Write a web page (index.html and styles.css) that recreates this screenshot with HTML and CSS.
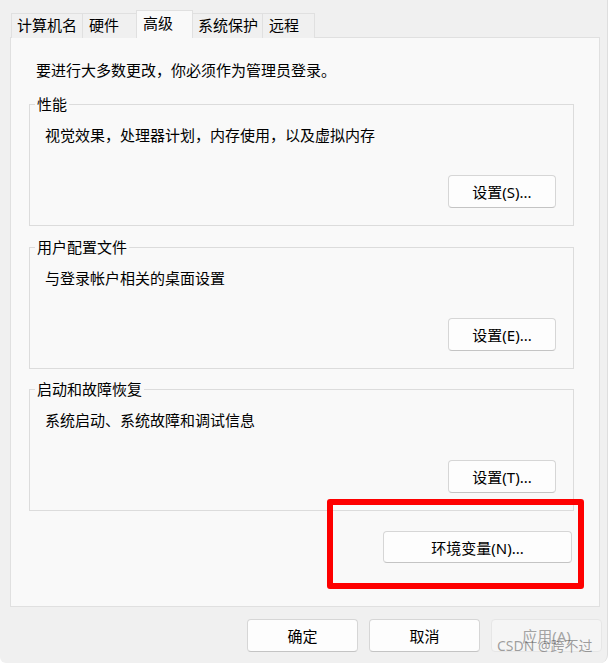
FILE: index.html
```html
<!DOCTYPE html>
<html lang="zh-CN">

<head>
    <meta charset="UTF-8">
    <meta name="viewport" content="width=device-width, initial-scale=1.0">
    <title>系统属性</title>
    <link rel="stylesheet" href="styles.css">
</head>

<body>
    <div class="window">
        <div class="tabs">
            <div class="tab">计算机名</div>
            <div class="tab">硬件</div>
            <div class="tab active">高级</div>
            <div class="tab">系统保护</div>
            <div class="tab">远程</div>
        </div>

        <div class="panel">
            <p class="note">要进行大多数更改，你必须作为管理员登录。</p>

            <fieldset class="group">
                <legend>性能</legend>
                <p class="desc">视觉效果，处理器计划，内存使用，以及虚拟内存</p>
                <div class="group-actions">
                    <button class="btn">设置(S)...</button>
                </div>
            </fieldset>

            <fieldset class="group">
                <legend>用户配置文件</legend>
                <p class="desc">与登录帐户相关的桌面设置</p>
                <div class="group-actions">
                    <button class="btn">设置(E)...</button>
                </div>
            </fieldset>

            <fieldset class="group group-last">
                <legend>启动和故障恢复</legend>
                <p class="desc">系统启动、系统故障和调试信息</p>
                <div class="group-actions">
                    <button class="btn">设置(T)...</button>
                </div>
            </fieldset>

            <div class="env-row">
                <button class="btn btn-env">环境变量(N)...</button>
            </div>
        </div>

        <div class="footer">
            <button class="btn btn-footer">确定</button>
            <button class="btn btn-footer">取消</button>
            <button class="btn btn-footer" disabled>应用(A)</button>
        </div>

        <!-- annotation drawn over the dialog -->
        <div class="highlight"></div>
        <div class="watermark">CSDN @跨不过</div>
    </div>
</body>

</html>
```

FILE: styles.css
```css
* {
    box-sizing: border-box;
}

body {
    margin: 0;
    background-color: #fff;
    font-family: "Segoe UI", "Noto Sans", "Noto Sans CJK SC", sans-serif;
    font-size: 15px;
    color: #000;
}

.window {
    position: relative;
    width: 608px;
    height: 663px;
    background-color: #f0f0f0;
    border-right: 1px solid #dedede;
    border-bottom-right-radius: 8px;
    border-bottom-left-radius: 6px;
    overflow: hidden;
}

/* tab strip */
.tabs {
    display: flex;
    align-items: flex-end;
    height: 38px;
    padding-left: 11px;
}

.tab {
    height: 25px;
    margin-left: -1px;
    padding: 0 5px;
    line-height: 23px;
    white-space: nowrap;
    border: 1px solid #e0e0e0;
    border-bottom: none;
    background-color: #f0f0f0;
}

.tab:first-child {
    margin-left: 0;
}

.tab:nth-child(1) { width: 72px; }
.tab:nth-child(2) { width: 55px; padding-left: 6px; }
.tab:nth-child(4) { width: 71px; }
.tab:nth-child(5) { width: 53px; padding-left: 6px; }

.tab.active {
    position: relative;
    z-index: 1;
    width: 57px;
    height: 28px;
    padding-left: 6px;
    line-height: 25px;
    background-color: #f9f9f9;
}

/* main page of the tab */
.panel {
    width: 590px;
    height: 570px;
    margin: -1px 0 0 10px;
    padding: 0 25px 0 18px;
    border: 1px solid #e0e0e0;
    background-color: #f9f9f9;
}

.note {
    margin: 21px 0 0 7px;
    line-height: 22px;
}

.group {
    margin: 12px 0 0 0;
    padding: 0 17px 17px 0;
    border: 1px solid #dcdcdc;
}

.group + .group {
    margin-top: 10px;
}

.group-last {
    margin-top: 9px !important;
}

.group legend {
    margin-left: 5px;
    padding: 0 2px;
    line-height: 22px;
}

.desc {
    margin: 9px 0 0 15px;
    line-height: 22px;
}

.group-actions {
    display: flex;
    justify-content: flex-end;
    margin-top: 29px;
}

.btn {
    height: 33px;
    width: 108px;
    padding: 0;
    font-family: inherit;
    font-size: 15px;
    color: #000;
    background-color: #fdfdfd;
    border: 1px solid #d6d6d6;
    border-bottom-color: #c4c4c4;
    border-radius: 4px;
}

.btn:disabled {
    color: #a3a3a3;
    background-color: #f5f5f5;
    border-color: #e6e6e6;
}

.env-row {
    display: flex;
    justify-content: flex-end;
    margin: 20px 2px 0 0;
}

.btn-env {
    width: 189px;
    height: 32px;
}

/* dialog buttons */
.footer {
    display: flex;
    justify-content: flex-end;
    gap: 11px;
    margin-top: 12px;
    padding-right: 5px;
}

.btn-footer {
    width: 111px;
    height: 33px;
}

.highlight {
    position: absolute;
    left: 327px;
    top: 499px;
    width: 257px;
    height: 90px;
    border: 6px solid #fe0000;
    border-radius: 3px;
}

.watermark {
    position: absolute;
    left: 497px;
    top: 636px;
    font-family: "Noto Sans", "Noto Sans CJK SC", sans-serif;
    font-size: 14px;
    line-height: 20px;
    color: rgba(70, 70, 70, 0.5);
    white-space: nowrap;
}
```
